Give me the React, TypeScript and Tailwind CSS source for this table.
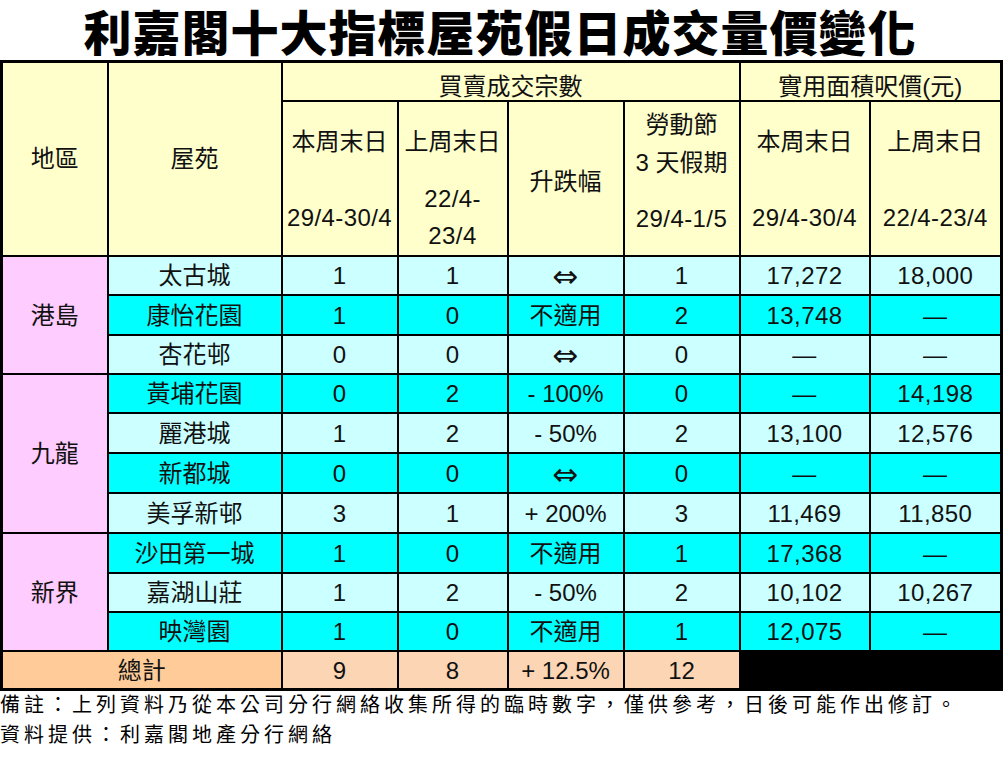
import React from "react";

interface Row {
  region?: string;
  span?: number;
  name: string;
  thisWk: string;
  lastWk: string;
  change: string;
  holiday: string;
  priceNow: string;
  pricePrev: string;
  h: string;
}

const rows: Row[] = [
  { region: "港島", span: 3, name: "太古城", thisWk: "1", lastWk: "1", change: "⇔", holiday: "1", priceNow: "17,272", pricePrev: "18,000", h: "h-[39px]" },
  { name: "康怡花園", thisWk: "1", lastWk: "0", change: "不適用", holiday: "2", priceNow: "13,748", pricePrev: "—", h: "h-[40px]" },
  { name: "杏花邨", thisWk: "0", lastWk: "0", change: "⇔", holiday: "0", priceNow: "—", pricePrev: "—", h: "h-[39px]" },
  { region: "九龍", span: 4, name: "黃埔花園", thisWk: "0", lastWk: "2", change: "- 100%", holiday: "0", priceNow: "—", pricePrev: "14,198", h: "h-[39px]" },
  { name: "麗港城", thisWk: "1", lastWk: "2", change: "- 50%", holiday: "2", priceNow: "13,100", pricePrev: "12,576", h: "h-[40px]" },
  { name: "新都城", thisWk: "0", lastWk: "0", change: "⇔", holiday: "0", priceNow: "—", pricePrev: "—", h: "h-[40px]" },
  { name: "美孚新邨", thisWk: "3", lastWk: "1", change: "+ 200%", holiday: "3", priceNow: "11,469", pricePrev: "11,850", h: "h-[40px]" },
  { region: "新界", span: 3, name: "沙田第一城", thisWk: "1", lastWk: "0", change: "不適用", holiday: "1", priceNow: "17,368", pricePrev: "—", h: "h-[40px]" },
  { name: "嘉湖山莊", thisWk: "1", lastWk: "2", change: "- 50%", holiday: "2", priceNow: "10,102", pricePrev: "10,267", h: "h-[39px]" },
  { name: "映灣園", thisWk: "1", lastWk: "0", change: "不適用", holiday: "1", priceNow: "12,075", pricePrev: "—", h: "h-[39px]" },
];

const cell = "border-2 border-black text-center align-middle p-0 pt-[2px] leading-[24px]";

function Change({ value }: { value: string }) {
  if (value === "⇔") {
    return (
      <span className="inline-block font-['DejaVu_Sans',sans-serif] text-[31px] leading-[24px] align-top">
        ⇔
      </span>
    );
  }
  return <>{value}</>;
}

export default function App() {
  return (
    <div className="w-[1006px] h-[757px] bg-white text-[#111] font-['Liberation_Sans','Noto_Sans_CJK_TC',sans-serif] overflow-hidden">
      {/* Title */}
      <div className="h-[60px] flex items-center justify-center pr-[6px]">
        <h1 className="text-[48px] leading-[60px] font-black tracking-[1px] text-black font-['Noto_Sans_CJK_TC',sans-serif]">
          利嘉閣十大指標屋苑假日成交量價變化
        </h1>
      </div>

      <table className="w-[1000px] table-fixed border-collapse border-[3px] border-black text-[24px]">
        <colgroup>
          <col className="w-[106px]" />
          <col className="w-[174px]" />
          <col className="w-[116px]" />
          <col className="w-[110px]" />
          <col className="w-[116px]" />
          <col className="w-[116px]" />
          <col className="w-[130px]" />
          <col className="w-[132px]" />
        </colgroup>
        <thead className="bg-[#FFFFCC]">
          <tr className="h-[39px]">
            <th rowSpan={2} className="border-2 border-black font-normal align-middle p-0">地區</th>
            <th rowSpan={2} className="border-2 border-black font-normal align-middle p-0">屋苑</th>
            <th colSpan={4} className="border-2 border-black font-normal align-bottom p-0 pb-[1px] leading-[24px]">
              買賣成交宗數
            </th>
            <th colSpan={2} className="border-2 border-black font-normal align-bottom p-0 pb-[1px] leading-[24px]">
              實用面積呎價(元)
            </th>
          </tr>
          <tr className="h-[155px]">
            <th className="border-2 border-black font-normal align-top p-0 pt-[21px] leading-[38px] whitespace-nowrap">
              <div>本周末日</div>
              <div className="mt-[38px] tracking-[0.4px]">29/4-30/4</div>
            </th>
            <th className="border-2 border-black font-normal align-top p-0 pt-[21px] leading-[37px] whitespace-nowrap">
              <div>上周末日</div>
              <div className="mt-[20px] tracking-[0.4px]">22/4-</div>
              <div className="tracking-[0.4px]">23/4</div>
            </th>
            <th className="border-2 border-black font-normal align-top p-0 pt-[61px] leading-[38px]">
              升跌幅
            </th>
            <th className="border-2 border-black font-normal align-top p-0 pt-[4px] leading-[38px] whitespace-nowrap">
              <div>勞動節</div>
              <div>3 天假期</div>
              <div className="mt-[18px] tracking-[0.4px]">29/4-1/5</div>
            </th>
            <th className="border-2 border-black font-normal align-top p-0 pt-[21px] leading-[38px] whitespace-nowrap">
              <div>本周末日</div>
              <div className="mt-[38px] tracking-[0.4px]">29/4-30/4</div>
            </th>
            <th className="border-2 border-black font-normal align-top p-0 pt-[21px] leading-[38px] whitespace-nowrap">
              <div>上周末日</div>
              <div className="mt-[38px] tracking-[0.4px]">22/4-23/4</div>
            </th>
          </tr>
        </thead>
        <tbody>
          {rows.map((r, i) => {
            const bg = i % 2 === 0 ? "bg-[#CCFFFF]" : "bg-[#00FFFF]";
            return (
              <tr key={r.name} className={`${r.h} ${bg}`}>
                {r.region && (
                  <td rowSpan={r.span} className={`${cell} bg-[#FFCCFF]`}>
                    {r.region}
                  </td>
                )}
                <td className={cell}>{r.name}</td>
                <td className={cell}>{r.thisWk}</td>
                <td className={cell}>{r.lastWk}</td>
                <td className={cell}>
                  <Change value={r.change} />
                </td>
                <td className={cell}>{r.holiday}</td>
                <td className={`${cell} tracking-[0.4px]`}>{r.priceNow}</td>
                <td className={`${cell} tracking-[0.4px]`}>{r.pricePrev}</td>
              </tr>
            );
          })}
          <tr className="h-[39px]">
            <td colSpan={2} className={`${cell} bg-[#FFCC99]`}>總計</td>
            <td className={`${cell} bg-[#FCD5B4]`}>9</td>
            <td className={`${cell} bg-[#FCD5B4]`}>8</td>
            <td className={`${cell} bg-[#FCD5B4]`}>+ 12.5%</td>
            <td className={`${cell} bg-[#FCD5B4]`}>12</td>
            <td className={`${cell} bg-black`}></td>
            <td className={`${cell} bg-black`}></td>
          </tr>
        </tbody>
      </table>

      {/* Notes */}
      <div className="-mt-[2px] text-[20px] leading-[30px] tracking-[4px] whitespace-nowrap text-black font-['Noto_Sans_CJK_TC',sans-serif]">
        <p>備註：上列資料乃從本公司分行網絡收集所得的臨時數字，僅供參考，日後可能作出修訂。</p>
        <p>資料提供：利嘉閣地產分行網絡</p>
      </div>
    </div>
  );
}
